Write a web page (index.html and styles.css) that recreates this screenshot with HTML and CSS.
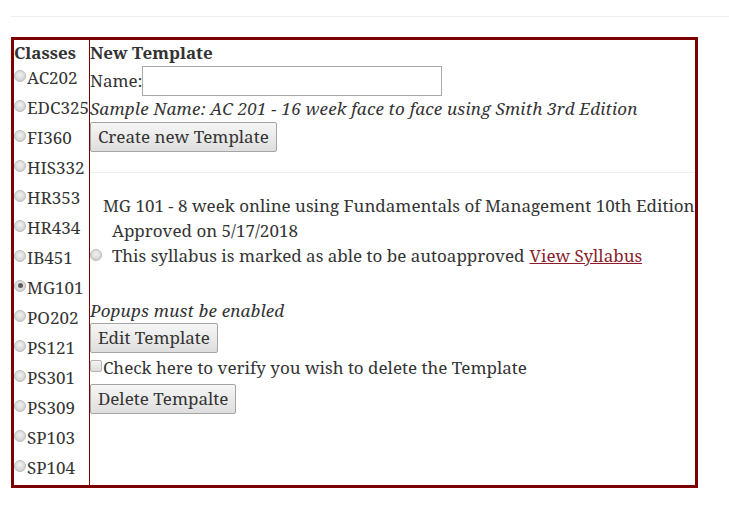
FILE: index.html
```html
<!DOCTYPE html>
<html>
<head>
<meta charset="utf-8">
<link rel="stylesheet" href="styles.css">
</head>
<body>
<div class="page">
  <hr class="top-rule">
  <table class="frame">
    <tr>
      <td class="classes">
        <div class="head left">Classes</div>
        <label class="cls"><span class="radio"></span>AC202</label>
        <label class="cls"><span class="radio"></span>EDC325</label>
        <label class="cls"><span class="radio"></span>FI360</label>
        <label class="cls"><span class="radio"></span>HIS332</label>
        <label class="cls"><span class="radio"></span>HR353</label>
        <label class="cls"><span class="radio"></span>HR434</label>
        <label class="cls"><span class="radio"></span>IB451</label>
        <label class="cls"><span class="radio checked"></span>MG101</label>
        <label class="cls"><span class="radio"></span>PO202</label>
        <label class="cls"><span class="radio"></span>PS121</label>
        <label class="cls"><span class="radio"></span>PS301</label>
        <label class="cls"><span class="radio"></span>PS309</label>
        <label class="cls"><span class="radio"></span>SP103</label>
        <label class="cls"><span class="radio"></span>SP104</label>
      </td>
      <td class="main">
        <div class="head">New Template</div>
        <div class="name-row">Name:<span class="input"></span></div>
        <div class="sample">Sample Name: AC 201 - 16 week face to face using Smith 3rd Edition</div>
        <span class="btn">Create new Template</span>
        <hr class="mid-rule">
        <div class="tmpl-title">MG 101 - 8 week online using Fundamentals of Management 10th Edition</div>
        <div class="approved">Approved on 5/17/2018</div>
        <div class="auto"><span class="radio small"></span>This syllabus is marked as able to be autoapproved <a class="link">View Syllabus</a></div>
        <div class="popups">Popups must be enabled</div>
        <span class="btn">Edit Template</span>
        <div class="check-row"><span class="checkbox"></span>Check here to verify you wish to delete the Template</div>
        <span class="btn del">Delete Tempalte</span>
      </td>
    </tr>
  </table>
</div>
</body>
</html>
```
FILE: styles.css
```css
html, body {
  margin: 0;
  padding: 0;
  background: #fff;
}
.page {
  padding: 0 0 0 11px;
  font-family: "Noto Serif", "Droid Serif", "DejaVu Serif", serif;
  font-size: 17px;
  line-height: 25px;
  color: #333;
}
.top-rule {
  margin: 0;
  margin-top: 16px;
  border: 0;
  border-top: 1px solid #eee;
  height: 0;
}
.frame {
  margin-top: 20px;
  border: 3px solid #7c0000;
  border-collapse: collapse;
  border-spacing: 0;
  width: 686px;
}
.frame td {
  padding: 0;
  vertical-align: top;
}
.frame td.classes {
  width: 75px;
  padding-bottom: 3px;
  border-right: 1px solid #7c0000;
}
.head {
  font-weight: bold;
  height: 25px;
  line-height: 26px;
}
.head.left {
  height: 22px;
}
.cls {
  display: flex;
  align-items: center;
  height: 30px;
  white-space: nowrap;
}
.radio {
  display: inline-block;
  width: 12px;
  height: 12px;
  border-radius: 50%;
  background: radial-gradient(circle at 50% 40%, #f2f2f2 0%, #d8d8d8 60%, #c4c4c4 100%);
  border: 1px solid #bdbdbd;
  box-sizing: border-box;
  margin: -3px 1px 0 0;
  position: relative;
  flex: none;
}
.radio.checked::after {
  content: "";
  position: absolute;
  left: 2.5px;
  top: 2.5px;
  width: 5px;
  height: 5px;
  border-radius: 50%;
  background: #5a5a5a;
}
.main {
  padding-left: 0;
}
.name-row {
  display: flex;
  align-items: center;
  height: 31px;
}
.input {
  display: inline-block;
  width: 298px;
  height: 28px;
  border: 1px solid #a9a9a9;
  background: #fff;
}
.sample {
  font-style: italic;
  letter-spacing: 0.2px;
  height: 26px;
  line-height: 26px;
}
.btn {
  display: inline-block;
  box-sizing: border-box;
  height: 30px;
  line-height: 28px;
  padding: 0 7px;
  border: 1px solid #a5a5a5;
  border-radius: 2px;
  background: linear-gradient(#f6f6f6, #dedede);
  color: #333;
  vertical-align: top;
}
.mid-rule {
  margin: 20px 0 0 0;
  border: 0;
  border-top: 1px solid #eee;
  height: 0;
}
.tmpl-title {
  margin-top: 20px;
  padding-left: 13px;
  white-space: nowrap;
}
.approved {
  padding-left: 22px;
}
.auto {
  display: flex;
  align-items: center;
  white-space: nowrap;
}
.radio.small {
  width: 12px;
  height: 12px;
  margin: -2px 10px 0 0;
}
.link {
  color: #8a1c2c;
  text-decoration: underline;
  margin-left: 5px;
}
.popups {
  margin-top: 30px;
  font-style: italic;
  letter-spacing: 0.2px;
  height: 25px;
  line-height: 25px;
}
.check-row {
  display: flex;
  align-items: center;
  height: 26px;
  padding-top: 1px;
  white-space: nowrap;
}
.checkbox {
  display: inline-block;
  box-sizing: border-box;
  width: 12px;
  height: 12px;
  border: 1px solid #b5b5b5;
  border-radius: 2px;
  background: linear-gradient(#f4f4f4, #dcdcdc);
  margin: -3px 1px 0 0;
  flex: none;
}
.del {
  margin-top: 4px;
}
```
